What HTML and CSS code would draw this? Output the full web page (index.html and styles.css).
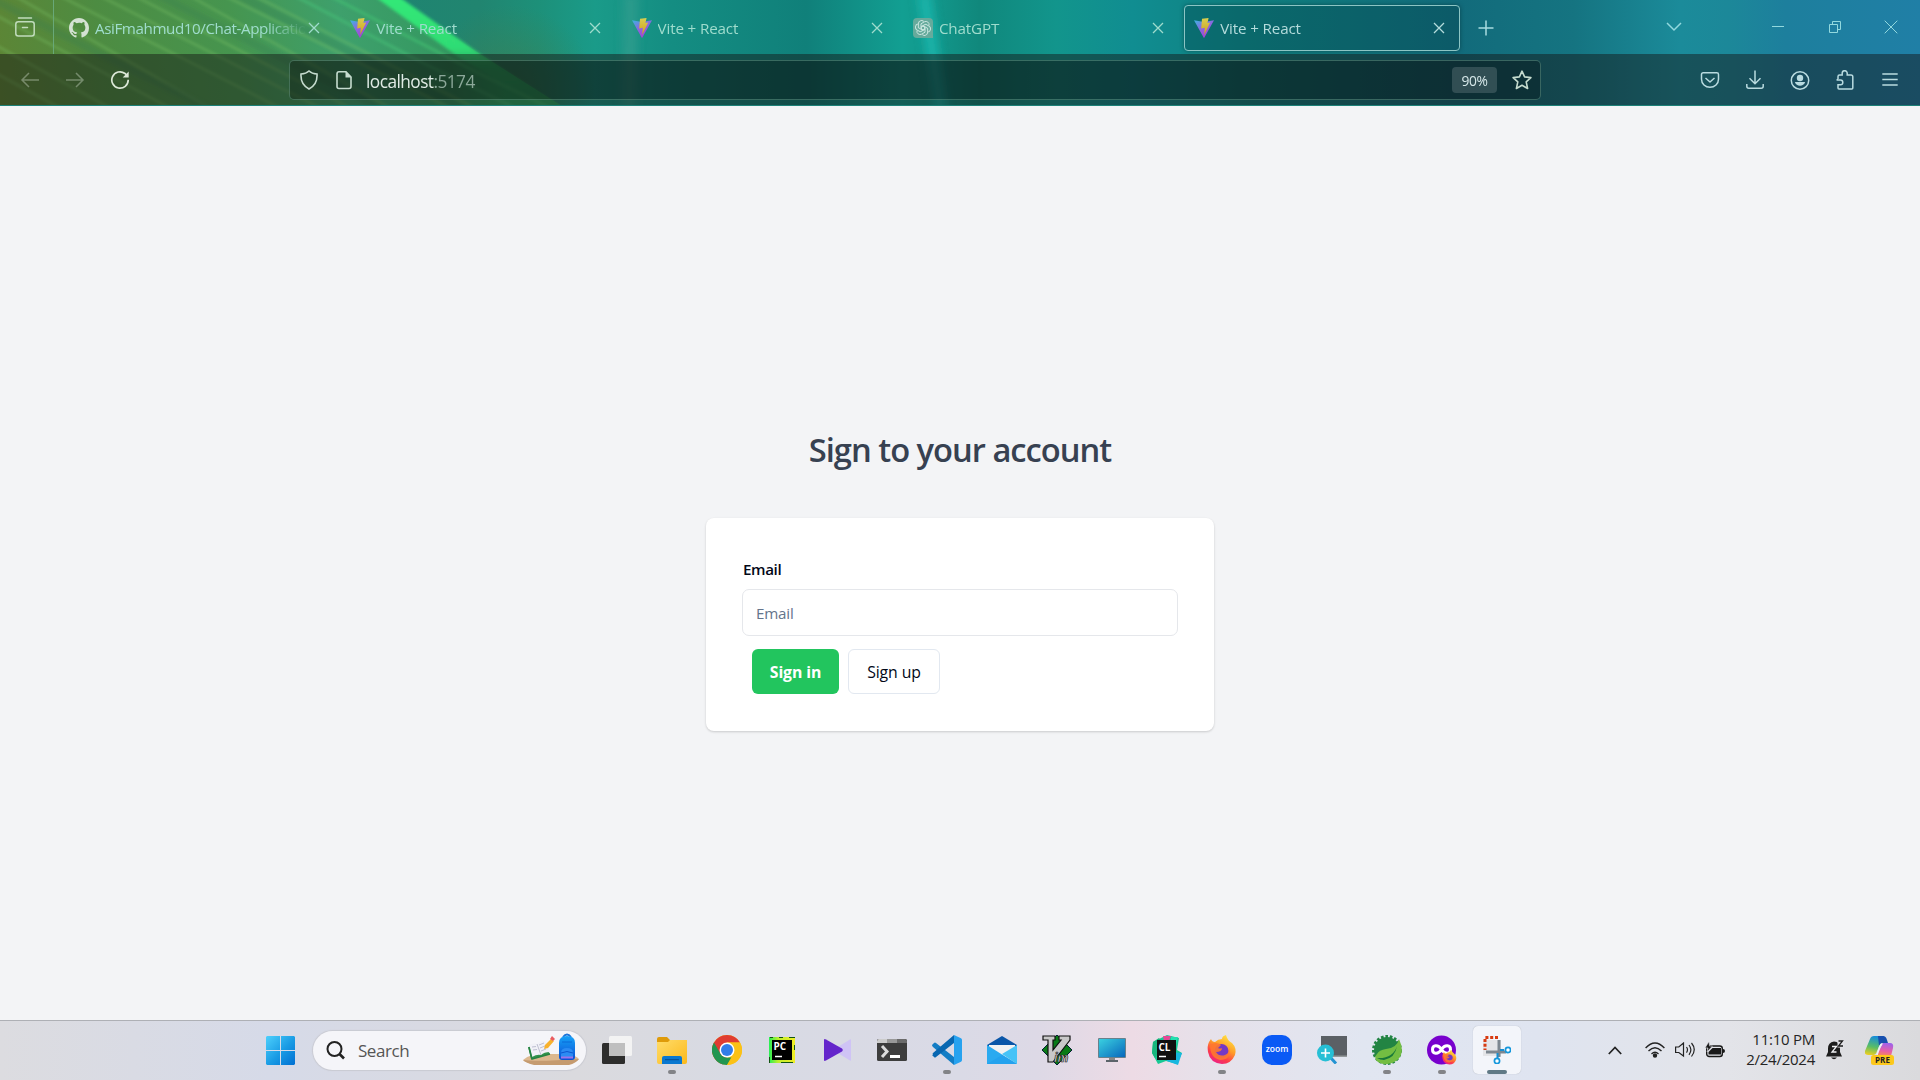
FILE: index.html
```html
<!DOCTYPE html>
<html lang="en">
<head>
<meta charset="utf-8">
<title>Vite + React</title>
<link rel="stylesheet" href="styles.css">
</head>
<body>
<svg class="defs" width="0" height="0" aria-hidden="true">
  <defs>
    <linearGradient id="vg1" x1="0" y1="0" x2=".6" y2="1"><stop offset="0" stop-color="#38b6e0"/><stop offset=".5" stop-color="#8a68e0"/><stop offset="1" stop-color="#a63fd0"/></linearGradient>
    <linearGradient id="vg2" x1="0" y1="0" x2="0" y2="1"><stop offset="0" stop-color="#d8cf50"/><stop offset="1" stop-color="#cfa01c"/></linearGradient>
    <symbol id="vite" viewBox="0 0 20 20"><path d="M0 2.2 10 4l10-1.8L10.4 19.6q-.4.6-.8 0z" fill="url(#vg1)"/><path d="m8 .8 6.6-.8-1.2 5 2.8-.4-6 12.2.6-7-3.6.6z" fill="url(#vg2)"/></symbol>
    <symbol id="x" viewBox="0 0 12 12"><path d="m1 1 10 10M11 1 1 11" fill="none" stroke="currentColor" stroke-width="1.3"/></symbol>
  </defs>
</svg>

<header class="browser">
  <svg class="theme" viewBox="0 0 1920 106" preserveAspectRatio="none" aria-hidden="true">
    <defs>
      <linearGradient id="sky" gradientUnits="userSpaceOnUse" x1="0" y1="0" x2="1920" y2="0">
        <stop offset="0" stop-color="#168274"/><stop offset=".25" stop-color="#218570"/><stop offset=".28" stop-color="#1d9079"/><stop offset=".31" stop-color="#1a9b89"/><stop offset=".35" stop-color="#148d82"/><stop offset=".42" stop-color="#10807a"/><stop offset=".47" stop-color="#129f92"/><stop offset=".485" stop-color="#12988c"/><stop offset=".51" stop-color="#10887c"/><stop offset=".55" stop-color="#12958c"/><stop offset=".59" stop-color="#108d91"/><stop offset=".65" stop-color="#10807f"/><stop offset=".76" stop-color="#126b7b"/><stop offset=".82" stop-color="#157481"/><stop offset=".875" stop-color="#1b8b9a"/><stop offset=".9" stop-color="#1c8899"/><stop offset=".93" stop-color="#1d7f9d"/><stop offset="1" stop-color="#207fa6"/>
      </linearGradient>
      <linearGradient id="leaf" gradientUnits="userSpaceOnUse" x1="0" y1="90" x2="490" y2="0">
        <stop offset="0" stop-color="#5d8535"/><stop offset=".22" stop-color="#4d8c42"/><stop offset=".48" stop-color="#46954f"/><stop offset=".7" stop-color="#3ea06c"/><stop offset=".9" stop-color="#349860"/><stop offset="1" stop-color="#2dab66"/>
      </linearGradient>
      <radialGradient id="warm" gradientUnits="userSpaceOnUse" cx="510" cy="90" r="85"><stop offset="0" stop-color="#3f8050" stop-opacity=".7"/><stop offset="1" stop-color="#3f8050" stop-opacity="0"/></radialGradient>
      <linearGradient id="ray" gradientUnits="userSpaceOnUse" x1="0" y1="0" x2="0" y2="106"><stop offset="0" stop-color="#31e877"/><stop offset=".45" stop-color="#2fdc74"/><stop offset=".65" stop-color="#2cb968" stop-opacity=".6"/><stop offset="1" stop-color="#2fa566" stop-opacity=".35"/></linearGradient>
      <filter id="soft" x="-20%" y="-20%" width="140%" height="140%"><feGaussianBlur stdDeviation="1.4"/></filter>
      <filter id="softer" x="-200%" y="-20%" width="500%" height="140%"><feGaussianBlur stdDeviation="5"/></filter>
    </defs>
    <rect width="1920" height="106" fill="url(#sky)"/>
    <rect x="420" width="180" height="106" fill="url(#warm)"/>
    <path d="M0 0H396L480 54 562 106H0z" fill="url(#leaf)"/>
    <g filter="url(#soft)">
      <path d="M374-4h24l82 58 84 54h-20l-84-50z" fill="url(#ray)"/>
      <path d="m330-4 150 78 70 34" stroke="#43c473" stroke-width="2.5" opacity=".7" fill="none"/>
      <path d="m295-4 130 68 90 44" stroke="#45bd75" stroke-width="2.500" opacity=".8" fill="none"/>
      <path d="m255-4 220 112M225-4l225 112M190-4l200 112M135-4l215 112M100-4l220 112M60-4l220 112M15-4l195 112M-10 12 170 108M-10 42 110 108M-10 70 60 108" stroke="#7fc768" stroke-width="1.800" opacity=".5" fill="none"/>
      <path d="m240-4 220 112M160-4l220 112M-10-2 215 112" stroke="#2c7850" stroke-width="8" opacity=".25" fill="none"/>
    </g>
    <g filter="url(#softer)"><path d="m917-6 14 0 16 118h-12z" fill="#20c5bd" opacity=".6"/><path d="M624-6h14l-2 118h-14z" fill="#58aa9d" opacity=".3"/></g>
  </svg>

  <div class="tabbar">
    <div class="tabview"><svg width="20" height="20" viewBox="0 0 20 20" fill="none" stroke="currentColor" stroke-width="1.5"><path d="M3.5 1h13" stroke-linecap="round"/><rect x=".8" y="4.8" width="18.4" height="14.2" rx="2.5"/><path d="M7.5 10.500h5" stroke-linecap="round"/></svg></div>
    <div class="tab">
      <svg class="fav" viewBox="0 0 16 16"><path fill="#d4e2d2" d="M8 0C3.580 0 0 3.580 0 8c0 3.540 2.290 6.530 5.470 7.590.4.070.55-.17.55-.38 0-.19-.01-.82-.01-1.490-2.010.37-2.530-.49-2.690-.94-.09-.23-.48-.94-.82-1.130-.28-.15-.68-.52-.01-.53.63-.01 1.080.58 1.230.82.72 1.210 1.870.87 2.330.66.07-.52.28-.87.51-1.070-1.780-.2-3.640-.89-3.640-3.950 0-.87.31-1.590.82-2.150-.08-.2-.36-1.020.08-2.120 0 0 .67-.21 2.200.82A7.600 7.600 0 0 1 8 3.860c.68 0 1.360.09 2 .27 1.530-1.040 2.200-.82 2.200-.82.44 1.100.16 1.920.08 2.120.51.56.82 1.270.82 2.150 0 3.070-1.870 3.750-3.650 3.950.29.25.54.73.54 1.480 0 1.070-.01 1.930-.01 2.200 0 .21.15.46.55.38A8.010 8.010 0 0 0 16 8c0-4.420-3.580-8-8-8z"/></svg>
      <span class="title long">AsiFmahmud10/Chat-Applicatio</span><svg class="close"><use href="#x"/></svg>
    </div>
    <div class="tab"><svg class="fav"><use href="#vite"/></svg><span class="title">Vite + React</span><svg class="close"><use href="#x"/></svg></div>
    <div class="tab"><svg class="fav"><use href="#vite"/></svg><span class="title">Vite + React</span><svg class="close"><use href="#x"/></svg></div>
    <div class="tab">
      <svg class="fav" viewBox="0 0 20 20"><path d="M4 0h12q4 0 4 4v16H4q-4 0-4-4V4q0-4 4-4z" fill="#66aa9c"/><g fill="none" stroke="#c9e6df" stroke-width="1"><path id="petal" d="M8 5.800 11.400 3.800a3.200 3.200 0 0 1 4.600 3.600M8 5.800v4.900l2.200 1.300"/><use href="#petal" transform="rotate(60 10 10)"/><use href="#petal" transform="rotate(120 10 10)"/><use href="#petal" transform="rotate(180 10 10)"/><use href="#petal" transform="rotate(240 10 10)"/><use href="#petal" transform="rotate(300 10 10)"/></g></svg>
      <span class="title">ChatGPT</span><svg class="close"><use href="#x"/></svg>
    </div>
    <div class="tab active"><svg class="fav"><use href="#vite"/></svg><span class="title">Vite + React</span><svg class="close"><use href="#x"/></svg></div>
    <svg class="newtab" width="16" height="16" viewBox="0 0 16 16"><path d="M8 .5v15M.5 8h15" stroke="currentColor" stroke-width="1.5"/></svg>
    <div class="window">
      <svg width="16" height="16" viewBox="0 0 16 16"><path d="m1 4 7 7 7-7" fill="none" stroke="currentColor" stroke-width="1.500"/></svg>
      <svg class="min" width="12" height="12" viewBox="0 0 12 12"><path d="M0 5.500h12" stroke="currentColor"/></svg>
      <svg width="12" height="12" viewBox="0 0 12 12" fill="none" stroke="currentColor"><path d="M.5 3.500h8v8h-8zM3.500 3.500v-3h8v8h-3"/></svg>
      <svg width="14" height="14" viewBox="0 0 14 14"><path d="m.7.7 12.600 12.600M13.300.7.700 13.300" stroke="currentColor"/></svg>
    </div>
  </div>

  <div class="toolbar">
    <div class="nav">
      <svg class="dim" width="20" height="20" viewBox="0 0 20 20"><path d="M19 10H2M9 3l-7 7 7 7" /></svg>
      <svg class="dim" width="20" height="20" viewBox="0 0 20 20"><path d="M1 10h17M11 3l7 7-7 7"/></svg>
      <svg width="20" height="20" viewBox="0 0 20 20"><path d="M18.200 9.800A8.200 8.200 0 1 1 15 3.500L17 5.500" stroke-width="1.700"/><path d="M18.700 1.500v6h-6z" fill="currentColor" stroke="none"/></svg>
    </div>
    <div class="urlbar">
      <svg width="20" height="20" viewBox="0 0 20 20"><path d="M10 1c2 1.900 4.600 2.800 8 3 .4 6-1.500 11.600-8 15C3.500 15.600 1.600 10 2 4c3.400-.2 6-1.100 8-3z" stroke-width="1.600"/></svg>
      <svg class="page" width="16" height="20" viewBox="0 0 16 20"><path d="M10 1.800H3Q1 1.800 1 4v12.500q0 2 2 2h10q2 0 2-2V7z" stroke-width="1.600"/><path d="M9.500 1.500V7.500h6z" fill="currentColor" stroke="none"/></svg>
      <span class="url">localhost<span class="port">:5174</span></span>
      <span class="zoom">90%</span>
      <svg width="20" height="20" viewBox="0 0 20 20"><path d="m10 1.200 2.600 5.700 6.300.7-4.700 4.200 1.400 6.700-5.600-3.200-5.600 3.200 1.400-6.700L1.100 7.600l6.300-.7z" stroke-width="1.600" stroke-linejoin="round"/></svg>
    </div>
    <div class="tools">
      <svg width="20" height="20" viewBox="0 0 20 20"><path d="M3.200 2.800h13.600q1.700 0 1.700 1.700v4.700a8.500 8.100 0 0 1-17 0V4.500q0-1.700 1.700-1.700zM5.500 8l4.500 4 4.500-4" stroke-linejoin="round"/></svg>
      <svg width="20" height="20" viewBox="0 0 20 20"><path d="M10 .500v13M4.500 8.300 10 13.700l5.500-5.400M1.800 14v2.300q0 2 2 2h12.400q2 0 2-2V14"/></svg>
      <svg width="20" height="20" viewBox="0 0 20 20"><circle cx="10" cy="10.500" r="8.700"/><circle cx="10" cy="8" r="3.200" fill="currentColor" stroke="none"/><path d="M4.800 12h10.400q-1.500 3.800-5.200 3.800T4.800 12z" fill="currentColor" stroke="none"/></svg>
      <svg width="20" height="20" viewBox="0 0 20 20"><path d="M3 9V6.500Q3 5 4.500 5H7.200V3.200a2.500 2.500 0 0 1 5 0V5h3.800q1.800 0 1.800 1.800V18q0 1-1 1H4q-1 0-1-1v-3.300h2.500a2.200 2.200 0 0 0 0-4.600H2.300V9"/></svg>
      <svg width="20" height="20" viewBox="0 0 20 20"><path d="M2.300 4h15.400M2.300 9.500h15.400M2.300 15h15.400" stroke-width="1.400"/></svg>
    </div>
  </div>
</header>

<main class="content">
  <h2>Sign to your account</h2>
  <form class="card">
    <label for="email">Email</label>
    <input id="email" type="email" placeholder="Email">
    <div class="actions"><button type="button" class="primary">Sign in</button><button type="button" class="outline">Sign up</button></div>
  </form>
</main>

<footer class="taskbar">
  <div class="apps">
    <div class="app"><svg width="29" height="29" viewBox="0 0 29 29"><defs><linearGradient id="win" x1="0" y1="0" x2="1" y2="1" gradientUnits="userSpaceOnUse" gradientTransform="scale(29)"><stop offset="0" stop-color="#4dd0fc"/><stop offset=".55" stop-color="#189ae4"/><stop offset="1" stop-color="#006fd2"/></linearGradient></defs><path fill="url(#win)" d="M1 0h13v14H0V1zM15 0h13l1 1v13H15zM0 15h14v14H1l-1-1zM15 15h14v13l-1 1H15z"/></svg></div>
    <div class="search">
      <svg width="19" height="19" viewBox="0 0 19 19" fill="none" stroke="#222" stroke-width="2"><circle cx="8.500" cy="8" r="7"/><path d="m13.500 13 4.500 4.500" stroke-width="2.600"/></svg>
      <span>Search</span>
      <svg width="58" height="34" viewBox="0 0 58 34"><defs><linearGradient id="bag" x1="0" y1="0" x2="0" y2="1"><stop offset="0" stop-color="#16a1f7"/><stop offset="1" stop-color="#0b50d5"/></linearGradient></defs>
        <path d="M1 27q5-4 12-6h33q7 1 11 5-3 3-9 5H12Q4 30 1 27z" fill="#dcb88f"/><path d="M1 27q14 2 56-1-3 4-10 6H12Q4 30 1 27z" fill="#c59b70"/>
        <path d="m6 14 3 12 19-5-3-5z" fill="#32934b"/><path d="M7 12q5-3 8-1 3-3 8-3l5 11q-6 0-9 3-4-1-9 2z" fill="#f1f1f7"/><path d="m15 11 4 11M10 14l4-.5M11 17l4-.5M17 12l5-2M18 15l5-2M19 18l5-2" stroke="#b8b9cc" stroke-width=".9"/><path d="m22 16 1-4 6-6 3 2-6 7z" fill="#f8b12d"/><path d="m28 6 2-3 3 3-2 2z" fill="#ea5b60"/><path d="M7 14 10 26l18-5" stroke="#268343" stroke-width="1.600" fill="none"/>
        <path d="M41 4q4-5 8 0" stroke="#1b74d9" stroke-width="2" fill="none"/><path d="M37 10q0-7 8-7t8 7v14q0 3-3 3H40q-3 0-3-3z" fill="url(#bag)"/><path d="M39 20q0-5 6-5t6 5v4H39z" fill="#2b8bf3"/><path d="M39 20q6-3 12 0" stroke="#0d55cf" fill="none"/><path d="M39 24.500h12" stroke="#9d72ea" stroke-width="2"/><path d="M40 9h10" stroke="#0a6ad8"/></svg>
    </div>
    <div class="app"><svg width="30" height="28" viewBox="0 0 30 28"><rect y="7" width="23" height="21" rx="1.500" fill="#2d2d2c"/><rect x="7" width="23" height="20" rx="1.500" fill="#f4f4f4" opacity=".93"/><path d="M7 7h16v13H7z" fill="#bfbfbf"/></svg></div>
    <div class="app running"><svg width="30" height="27" viewBox="0 0 30 27"><defs><linearGradient id="fold" x1="0" y1="0" x2="1" y2="1"><stop offset="0" stop-color="#ffdc6a"/><stop offset="1" stop-color="#fbb91b"/></linearGradient></defs><path d="M0 2q0-2 2-2h8l3 3h15q2 0 2 2v10H0z" fill="#df9b0a"/><path d="M0 5h11l2-2h17v22q0 2-2 2H2q-2 0-2-2z" fill="url(#fold)"/><path d="M5 27v-6q0-2 2-2h16q2 0 2 2v6z" fill="#0a78d0"/><path d="M8 22.700h14" stroke="#084d91"/></svg></div>
    <div class="app"><svg width="30" height="30" viewBox="0 0 30 30"><circle cx="15" cy="15" r="15" fill="#fbc116"/><path d="M15 0a15 15 0 0 1 13 7.500H15v15L11 29.400A15 15 0 0 1 2 7.500 15 15 0 0 1 15 0z" fill="#e03c31"/><path d="M2 7.500 8.500 18.700Q10.500 22.500 15 22.500h5.500L15 30A15 15 0 0 1 2 7.500z" fill="#229650"/><path d="M21.500 11.200 21.200 19 15 30A15 15 0 0 0 28 7.500H15z" fill="#fbc116"/><circle cx="15" cy="15" r="7.500" fill="#fff"/><circle cx="15" cy="15" r="6" fill="#327de8"/></svg></div>
    <div class="app"><svg width="26" height="26" viewBox="0 0 26 26"><defs><linearGradient id="pc"><stop offset="0" stop-color="#25ee56"/><stop offset=".35" stop-color="#bcee2b"/><stop offset="1" stop-color="#f1ee26"/></linearGradient></defs><path fill="url(#pc)" d="M0 0h26v26H0z"/><path d="M3 3h20v20H3z" fill="#000"/><path d="M1 .5h3m6 0h4m6 0h6M.5 20v6M25.500 8v5M12 25.500h12" stroke="#151"/><text x="4.500" y="13" class="pclogo">PC</text><path d="M6 19.500h7" stroke="#fff" stroke-width="1.500"/></svg></div>
    <div class="app"><svg width="27" height="22" viewBox="0 0 27 22"><path d="M27 1v20q0 1-1 .5L9 11 26 .5q1-.5 1 .5z" fill="#cfc3f5"/><path d="M0 1v20q0 1.500 2 .5L18 12.500q1.500-1.500 0-3L2 .5Q0-.5 0 1z" fill="#6425cb"/></svg></div>
    <div class="app"><svg width="30" height="22" viewBox="0 0 30 22"><rect width="30" height="22" rx="1.500" fill="#3d3d3d"/><path d="M1.500 0H10v4H0V1.500z" fill="#ccc"/><path d="M10 0h10v4H10z" fill="#999"/><path d="M20 0h8.500L30 1.500V4H20z" fill="#6b6b6b"/><path d="m5 7 5 5.500-5 5.500" stroke="#dcdcdc" stroke-width="3" fill="none"/><path d="M13 17.500h10" stroke="#fff" stroke-width="3"/></svg></div>
    <div class="app running"><svg width="30" height="30" viewBox="0 0 30 30"><path d="m0 10 2-2q1-1 2 0l18 14v8L1 12q-1-1-1-2z" fill="#137dc5"/><path d="m0 20 2 2q1 1 2 0L22 8V0L1 18q-1 1 0 2z" fill="#0867b1"/><path d="m22 0 7 3.200q1 .5 1 1.800v20q0 1.300-1 1.800L22 30z" fill="#27a2ef"/></svg></div>
    <div class="app"><svg width="30" height="28" viewBox="0 0 30 28"><path d="M0 9 15 0l15 9v8H0z" fill="#0a56a8"/><path d="M2 9h26v6l-13 8L2 15z" fill="#f2f2f2"/><path d="m0 9 30 19H0z" fill="#2aaaf0"/><path d="M30 9v19L15 18z" fill="#46c3f7"/><path d="m0 28 15-9 15 9z" fill="#24a2ee"/></svg></div>
    <div class="app"><svg width="30" height="30" viewBox="0 0 30 30"><path d="m15 0 15 15-15 15L0 15z" fill="#087b16" stroke="#041c35"/><path d="M1 1h12v4h-2v10L19 5h-2V1h11v4L11 27H6V5H1z" fill="#c8c8c8" stroke="#111" stroke-width="1.200"/><text x="12" y="27" class="vimlogo">im</text></svg></div>
    <div class="app"><svg width="28" height="24" viewBox="0 0 28 24"><defs><linearGradient id="mon" x1="0" y1="0" x2="1" y2="1"><stop offset="0" stop-color="#3ad0e0"/><stop offset="1" stop-color="#0867bc"/></linearGradient></defs><path d="M11 20h6v3h-6z" fill="#888"/><path d="M8 22h12v2H8z" fill="#5c646a"/><rect width="28" height="20" rx="1" fill="#69818c"/><path d="M1 1h26v18H1z" fill="url(#mon)"/></svg></div>
    <div class="app"><svg width="30" height="30" viewBox="0 0 30 30"><path d="M1 7 15 0l12 3-2 12 5 3-5 11-11-3-8 3-6-11z" fill="#17c994"/><path d="m1 7 6-4 5 6-9 14-3-5z" fill="#18b77d"/><path d="m16 17 14 1-4 12-11-4z" fill="#18b7df"/><path d="m11 1 8 0-2 5h-5z" fill="#e54896"/><path d="m19 2 7 0-2 8-5-4z" fill="#24dfb0"/><path d="M5 5h19v20H5z" fill="#101010"/><text x="6.500" y="16" class="pclogo">CL</text><path d="M7 21.500h7" stroke="#fff" stroke-width="1.500"/></svg></div>
    <div class="app running"><svg width="30" height="30" viewBox="0 0 30 30"><defs><linearGradient id="ff" x1=".85" y1="0" x2=".3" y2="1"><stop offset="0" stop-color="#ffef45"/><stop offset=".45" stop-color="#ff9b28"/><stop offset=".75" stop-color="#fc3b49"/><stop offset="1" stop-color="#ec208a"/></linearGradient><symbol id="fox" viewBox="0 0 30 30"><path d="M2 7 4 4q1 3 4 3 3-3 7-3 0-3 4-4 1 5 6 8 5 5 3 12-4 9-13 9Q3 28 1 17 0 11 2 7z" fill="url(#ff)"/><circle cx="14.500" cy="16" r="7" fill="#7438c5"/><path d="M3 10q6-4 11 0l-3 3q2 1 4 0 0 4-6 4 3 5 9 3 5-2 4-8 3 13-9 13Q3 23 3 10z" fill="#ff782f" opacity=".9"/></symbol></defs><use href="#fox"/></svg></div>
    <div class="app"><svg width="30" height="30" viewBox="0 0 30 30"><rect width="30" height="30" rx="10" fill="#0a5af5"/><text x="15" y="17" text-anchor="middle" class="zoomlogo">zoom</text></svg></div>
    <div class="app"><svg width="30" height="28" viewBox="0 0 30 28"><path d="M4 0h26v21H4z" fill="#5b6065"/><path d="M4 19.500h26V21H4z" fill="#94999b"/><path d="m13 21 6 6.500" stroke="#2493d2" stroke-width="3"/><circle cx="8.500" cy="17" r="8.500" fill="#26bfd5"/><path d="M8.500 12.500v9M4 17h9" stroke="#fff" stroke-width="1.600"/></svg></div>
    <div class="app running"><svg width="30" height="30" viewBox="0 0 30 30"><circle cx="15" cy="15" r="13.500" fill="none" stroke="#228443" stroke-width="3" stroke-dasharray="2.600 1.800"/><circle cx="15" cy="15" r="13" fill="#228443"/><path d="M27 4q7 15-3 22-9 6-18 1-5-4-1-8 2-4 9-5 11-1 13-10z" fill="#73bd42"/><path d="M5 23q16 1 20-12-2 12-13 14-4 0-7-2z" fill="#18783a"/></svg></div>
    <div class="app running"><svg width="30" height="30" viewBox="0 0 30 30"><circle cx="14.500" cy="15" r="14.500" fill="#7800cd"/><path d="M14.500 14.500C11 9 5.500 10 5.500 14.500s5.500 5.500 9 0 9-4.500 9 0-5.500 5.500-9 0z" fill="none" stroke="#fff" stroke-width="3"/><use href="#fox" x="15" y="15" width="15" height="15"/></svg></div>
    <div class="app running current"><svg width="28" height="28" viewBox="0 0 28 28"><path d="M0 4h18v16H0z" fill="#e4e5e8"/><path d="M15 1.500H2v12.500" fill="none" stroke="#d83b11" stroke-width="3" stroke-dasharray="3 1.800"/><path d="M16 4v17M3 16h20" stroke="#7d8790" stroke-width="3"/><path d="m17 14 4 0M14.500 17v5" stroke="#168ed0" stroke-width="2"/><circle cx="25" cy="14" r="2.600" fill="#fff" stroke="#1597dc" stroke-width="1.700"/><circle cx="14" cy="25" r="2.600" fill="#fff" stroke="#1597dc" stroke-width="1.700"/></svg></div>
  </div>
  <div class="tray">
    <svg class="up" width="14" height="9" viewBox="0 0 14 9"><path d="m.8 8 6.200-6.500L13.200 8" fill="none" stroke="#222" stroke-width="1.700"/></svg>
    <svg width="20" height="16" viewBox="0 0 20 16" fill="none" stroke="#222" stroke-width="1.400"><path d="M.6 6Q10-4 19.400 6M3.500 9q6.500-6.500 13 0M6.500 12q3.500-3.300 7 0"/><circle cx="10" cy="13.500" r="1.500" fill="#222"/></svg>
    <svg width="20" height="16" viewBox="0 0 20 16" fill="none" stroke="#222" stroke-width="1.200"><path d="M.6 5h3.200L8.500 1v13L3.800 10.500H.6zM11.500 5q2 2.800 0 5.600M14 3q3.800 4.800 0 9.800M16.500 1q5.500 6.500 0 13.500"/></svg>
    <svg width="20" height="17" viewBox="0 0 20 17"><rect x="1.700" y="4" width="15.600" height="10.500" rx="2.500" fill="none" stroke="#181818" stroke-width="1.400"/><path d="M7.500 6H16v6.500H3.500V10zM18 7q2 0 2 2t-2 2z" fill="#181818"/><path d="M4-.5 0 6h3L2 10l5.500-6H4.500z" fill="#181818" stroke="#e2e3e9" stroke-width=".6"/></svg>
    <div class="clock"><span class="time">11:10 PM</span><span>2/24/2024</span></div>
    <svg class="bell" width="18" height="20" viewBox="0 0 18 20"><path d="M8 1.500q-6 1-6 7V12l-2 4.500h16L14 12V8.500q0-7-6-7z" fill="#1d1d1d"/><path d="M5 17.500h6q-3 3.500-6 0z" fill="#1d1d1d"/><path d="M11.500-.5H19v8h-7.500z" fill="#e1e1e6"/><path d="M6 6.500h4.500L6 12h4.500" stroke="#f1f1f4" stroke-width="1.300" fill="none"/><path d="M12.500 1h4l-4 5H17" stroke="#1d1d1d" stroke-width="1.300" fill="none"/></svg>
    <svg class="copilot" width="30" height="29" viewBox="0 0 30 29"><defs><linearGradient id="cp1" x1=".4" y1="0" x2=".2" y2="1"><stop offset="0" stop-color="#178ed9"/><stop offset=".55" stop-color="#59bd65"/><stop offset="1" stop-color="#f0cf20"/></linearGradient><linearGradient id="cp2" x1=".6" y1="0" x2=".4" y2="1"><stop offset="0" stop-color="#9d62ec"/><stop offset=".6" stop-color="#e75fa7"/><stop offset="1" stop-color="#f68b55"/></linearGradient></defs><path d="M5 3q1-3 4-3h10l-7 15q-1 4-4 4H3q-4 0-3-4z" fill="url(#cp1)"/><path d="M13 0h5q3 0 4 4l1 3h-5q-3 0-4 3z" fill="#174fae"/><path d="M18 7h7q4 0 3 5l-2 8H10q2 0 3-3z" fill="url(#cp2)"/><path d="M17 8q-2 1-3 5l-2 6" stroke="#eef0f5" stroke-width="1.500" fill="none"/><rect x="6" y="19" width="23" height="10" rx="2.500" fill="#fcc81b"/><text x="17.500" y="26.800" text-anchor="middle" class="pre">PRE</text></svg>
  </div>
</footer>
</body>
</html>
```
FILE: styles.css
```css
* { box-sizing: border-box; }
body { margin: 0; width: 1920px; height: 1080px; overflow: hidden; display: flex; flex-direction: column; background: #f3f4f6; font-family: "Open Sans", "Noto Sans", sans-serif; color: #020817; }
svg { flex: none; display: block; }
.defs { position: absolute; }

.browser { position: relative; height: 106px; flex: none; overflow: hidden; border-bottom: 1px solid #1c8178; color: #9fdccd; }
.theme { position: absolute; inset: 0; width: 1920px; height: 106px; }
.tabbar { position: relative; height: 54px; display: flex; align-items: center; }
.tabview { width: 54px; height: 54px; padding: 17px 0 0 15px; border-right: 1px solid #68a878; color: #c1dcbc; margin-right: 5px; }
.tab { width: 276px; height: 46px; margin-top: 1px; margin-right: 5.300px; padding: 0 14px 0 9px; display: flex; align-items: center; border: 1px solid transparent; border-radius: 4px; }
.fav { width: 20px; height: 20px; margin-right: 6px; }
.title { flex: 1; font-size: 15.200px; letter-spacing: -.15px; white-space: nowrap; overflow: hidden; line-height: 24px; }
.title.long { letter-spacing: -.42px; -webkit-mask-image: linear-gradient(90deg, #000 170px, transparent 212px); mask-image: linear-gradient(90deg, #000 170px, transparent 212px); }
.close { width: 12px; height: 12px; margin-left: 3px; }
.active { background: rgba(0, 55, 65, .32); border-color: #8cc5c4; color: #b4dcdc; box-shadow: 0 0 4px rgba(0, 40, 45, .5); }
.newtab { margin: 1px 0 0 13px; color: #a9dbe0; }
.window { margin-left: auto; display: flex; align-items: center; width: 254px; color: #92d9de; }
.window svg:nth-child(2) { margin-left: 90px; }
.window svg:nth-child(3) { margin-left: 45px; }
.window svg:nth-child(4) { margin-left: 43px; }

.toolbar { position: relative; height: 51px; display: flex; align-items: center; background: rgba(20, 18, 18, .46); color: #c9dfdd; }
.toolbar svg { fill: none; stroke: currentColor; stroke-width: 1.500; }
.nav { width: 289px; padding-left: 20px; display: flex; gap: 25px; color: #dce8d8; }
.nav .dim { opacity: .38; }
.urlbar { width: 1252px; height: 40px; display: flex; align-items: center; padding: 0 8px 0 9px; border: 1px solid rgba(130, 190, 165, .38); border-radius: 5px; background: rgba(0, 0, 0, .28); color: #c6dccf; }
.page { margin-left: 17px; }
.url { margin-left: 14px; font-size: 17.300px; letter-spacing: -.55px; padding-top: 4px; color: #e1ece6; flex: 1; }
.port { color: #8ca89a; }
.zoom { width: 45px; height: 26px; line-height: 27px; margin-right: 15px; border-radius: 4px; background: rgba(255, 255, 255, .15); font-size: 13.800px; letter-spacing: -.4px; text-align: center; color: #d8e9ea; }
.tools { margin-left: auto; padding-right: 20px; display: flex; gap: 25px; color: #b9dbe0; }

.content { flex: 1; display: flex; flex-direction: column; align-items: center; padding-top: 320px; }
h2 { margin: 0 0 45px; font-size: 32.700px; line-height: 47px; font-weight: 600; letter-spacing: -1px; color: #374151; }
.card { width: 508px; height: 213px; padding: 36px; border-radius: 8px; background: #fff; box-shadow: 0 1px 3px rgba(0, 0, 0, .1), 0 1px 2px rgba(0, 0, 0, .08); }
label { display: block; padding-left: 1px; font-size: 15.200px; line-height: 30px; font-weight: 600; letter-spacing: -.4px; }
input { display: block; width: 436px; height: 47px; margin-top: 5px; padding: 0 13px; border: 1px solid #e5e7eb; border-radius: 7px; background: #fff; font: 15.200px "Open Sans", sans-serif; letter-spacing: -.2px; }
input::placeholder { color: #64748b; opacity: 1; }
.actions { display: flex; gap: 9px; padding: 13px 0 0 10px; }
button { height: 45px; padding: 0; border-radius: 6px; border: 0; font: 15.800px "Open Sans", sans-serif; letter-spacing: -.1px; }
.primary { width: 87px; background: #22c55e; color: #fff; font-weight: 700; letter-spacing: -.1px; }
.outline { width: 92px; border: 1px solid #e2e8f0; background: #fff; color: #020817; }

.taskbar { height: 60px; flex: none; display: flex; align-items: center; justify-content: space-between; padding: 0 0 1px 256px; border-top: 1px solid #aeb0b5; background: linear-gradient(90deg, #dcdce0 0, #d6dae8 14%, #dadade 30%, #d8dae3 38%, #dadae6 50%, #ddd9e6 54%, #eddbe5 59%, #e6e1ea 63%, #e1e6f1 71%, #dfe4f0 80%, #e3e4e9 90%, #dadadd 100%); color: #303030; }
.apps { display: flex; gap: 7px; align-items: center; }
.app { position: relative; width: 48px; height: 48px; display: flex; align-items: center; justify-content: center; border-radius: 5px; }
.running::after { content: ""; position: absolute; bottom: 0; left: 20px; width: 8px; height: 4px; border-radius: 2px; background: #828387; }
.current { background: #f3f5fa; box-shadow: 0 0 1px #a4a9b2; }
.current::after { left: 14px; bottom: 0; width: 20px; background: #607985; }
.search { width: 273px; height: 39px; margin-left: 2px; padding: 0 6px 0 13px; display: flex; align-items: center; border-radius: 20px; background: #f5f5f9; box-shadow: 0 0 1px 1px #c9cad2; }
.search span { flex: 1; margin-left: 13px; font-size: 17px; letter-spacing: -.45px; color: #555; }
.pclogo { font: bold 10px "Open Sans", sans-serif; fill: #fff; }
.vimlogo { font: italic bold 12px "Open Sans", sans-serif; fill: #ddd; stroke: #222; stroke-width: .7px; }
.zoomlogo { font: 600 8.500px "Open Sans", sans-serif; fill: #fff; }
.pre { font: bold 8px "Open Sans", sans-serif; fill: #222; }
.tray { display: flex; align-items: center; padding-right: 25px; }
.up { margin-right: 23px; }
.tray .up + svg, .tray .up + svg + svg { margin-right: 10px; }
.clock { width: 90px; padding-bottom: 2px; display: flex; flex-direction: column; align-items: flex-end; font-size: 15px; line-height: 20px; letter-spacing: -.25px; color: #252525; }
.bell { margin-left: 11px; margin-right: 21px; }
```
